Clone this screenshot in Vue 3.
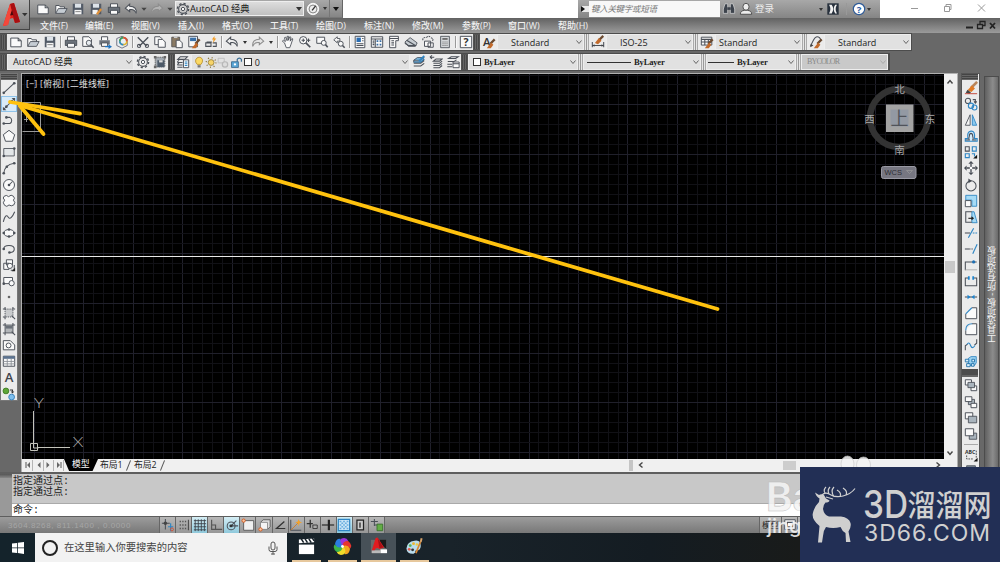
<template>
  <div class="screen">
    <div class="app-button">
      <svg class="app-logo" viewBox="0 0 30 30">
        <path d="M3 26 L10 4 L14 3 L20 22 L15 23 L13 18 L9 19 L8 25 Z" fill="#e2231a" />
        <path d="M10 4 L14 3 L20 22 L15 23 L12 12 Z" fill="#a80f12" />
        <path d="M3 26 L10 4 L12 12 L8 25 Z" fill="#f4473a" />
        <path d="M10 15.500 L12 10 L13.300 15 Z" fill="#4a0a0c" />
        <path d="M22 13 h5.500 l-2.700 3.200 z" fill="#333" />
      </svg>
    </div>

    <header class="titlebar">
      <div class="quick">
        <span v-for="(q, i) in quickIcons" :key="i" class="cell" :style="{ width: q.w + 'px' }">
          <svg class="ic" viewBox="0 0 16 16" v-html="icons[q.n]"></svg>
        </span>
        <div class="workspace">
          <svg class="ic" viewBox="0 0 16 16" v-html="icons.gear"></svg>
          <span class="ws-name">AutoCAD 经典</span>
          <i class="tri"></i>
        </div>
        <span class="cell w17"><svg class="ic" viewBox="0 0 16 16" v-html="icons.gauge"></svg></span>
        <span class="cell w8"><i class="tri small"></i></span>
        <span class="cell w13 custom"><i class="tri dark"></i></span>
      </div>
      <div class="title-gap"></div>
      <div class="info">
        <span class="info-arrow"><i class="tri right"></i></span>
        <div class="search">键入关键字或短语</div>
        <span class="cell w18"><svg class="ic" viewBox="0 0 16 16" v-html="icons.binoculars"></svg></span>
        <span class="cell w16"><svg class="ic" viewBox="0 0 16 16" v-html="icons.person"></svg></span>
        <span class="login">登录</span>
        <i class="tri small"></i>
        <span class="cell w20"><svg class="ic" viewBox="0 0 16 16" v-html="icons.exchange"></svg></span>
        <span class="info-sep"></span>
        <span class="cell w17"><svg class="ic" viewBox="0 0 16 16" v-html="icons.help"></svg></span>
        <i class="tri small last"></i>
      </div>
      <div class="window-ctl">
        <svg class="ctl" viewBox="0 0 120 18">
          <path d="M31 8.500h7M64.500 6.500h5v5h-5zM66 6.500v-2h5v5h-1.500M98 4.500l7 7M105 4.500l-7 7" fill="none" stroke="#999" stroke-width="1" />
        </svg>
      </div>
    </header>

    <nav class="menubar">
      <span v-for="m in menus" :key="m.t" class="menu" :style="{ width: m.w + 'px' }">{{ m.t }}</span>
      <svg class="doc-ctl" viewBox="0 0 36 15">
        <path d="M2 9.500h7" stroke="#222" stroke-width="2" />
        <path d="M13.500 6.500h5v4h-5zM16 6v-2.500h5v4h-2" fill="none" stroke="#222" stroke-width="1.300" />
        <path d="M26 5l5 5.500M31 5l-5 5.500" stroke="#222" stroke-width="1.800" />
      </svg>
    </nav>

    <div class="toolrow">
      <span class="grip"></span>
      <div class="strip std">
        <template v-for="(n, i) in standardIcons" :key="i">
          <span v-if="n === '|'" class="vsep"></span>
          <span v-else-if="n === 'v'" class="cell w9"><i class="tri small"></i></span>
          <span v-else class="cell w17"><svg class="ic" viewBox="0 0 16 16" v-html="icons[n]"></svg></span>
        </template>
      </div>
      <span class="grip"></span>
      <template v-for="(s, i) in styleCombos" :key="s.icon">
        <span v-if="i" class="dsep"></span>
        <span class="strip cell w17"><svg class="ic" viewBox="0 0 16 16" v-html="icons[s.icon]"></svg></span>
        <div class="combo style" :style="{ paddingLeft: s.pad + 'px' }">
          <span>{{ s.text }}</span>
          <svg class="chev" viewBox="0 0 8 8"><path d="M1.500 2.500l2.500 3 2.500-3" /></svg>
        </div>
      </template>
    </div>

    <div class="toolrow second">
      <span class="grip"></span>
      <div class="combo ws">
        <span class="ws-name">AutoCAD 经典</span>
        <svg class="chev" viewBox="0 0 8 8"><path d="M1.500 2.500l2.500 3 2.500-3" /></svg>
      </div>
      <div class="strip">
        <span class="cell w17"><svg class="ic" viewBox="0 0 16 16" v-html="icons.gear"></svg></span>
        <span class="cell w17"><svg class="ic" viewBox="0 0 16 16" v-html="icons.wsSave"></svg></span>
      </div>
      <span class="grip"></span>
      <div class="strip"><span class="cell w16"><svg class="ic" viewBox="0 0 16 16" v-html="icons.layerProps"></svg></span></div>
      <div class="combo layer">
        <svg v-for="n in ['bulb', 'sun', 'vpFreeze', 'unlock']" :key="n" class="ic lay" viewBox="0 0 16 16" v-html="icons[n]"></svg>
        <i class="swatch"></i><span>0</span>
        <svg class="chev" viewBox="0 0 8 8"><path d="M1.500 2.500l2.500 3 2.500-3" /></svg>
      </div>
      <div class="strip">
        <span v-for="n in ['layers', 'layerPrev', 'layerState']" :key="n" class="cell w17">
          <svg class="ic" viewBox="0 0 16 16" v-html="icons[n]"></svg>
        </span>
      </div>
      <span class="grip"></span>
      <div class="combo prop color">
        <i class="swatch"></i><span>ByLayer</span>
        <svg class="chev" viewBox="0 0 8 8"><path d="M1.500 2.500l2.500 3 2.500-3" /></svg>
      </div>
      <span class="dsep"></span>
      <div class="combo prop ltype">
        <i class="line"></i><span>ByLayer</span>
        <svg class="chev" viewBox="0 0 8 8"><path d="M1.500 2.500l2.500 3 2.500-3" /></svg>
      </div>
      <span class="dsep"></span>
      <div class="combo prop lweight">
        <i class="line"></i><span>ByLayer</span>
        <svg class="chev" viewBox="0 0 8 8"><path d="M1.500 2.500l2.500 3 2.500-3" /></svg>
      </div>
      <span class="dsep"></span>
      <div class="combo prop plot">
        <span>BYCOLOR</span>
        <svg class="chev" viewBox="0 0 8 8"><path d="M1.500 2.500l2.500 3 2.500-3" /></svg>
      </div>
    </div>

    <main class="work">
      <aside class="dock left">
        <div class="vgrip"></div>
        <span v-for="n in drawIcons" :key="n" class="vcell" :class="{ hot: n === 'xline' }">
          <svg class="ic" viewBox="0 0 16 16" v-html="icons[n]"></svg>
        </span>
      </aside>

      <section class="doc">
        <div class="view-row">
          <svg class="canvas" viewBox="22 74 922 385">
            <rect x="22" y="74" width="922" height="385" fill="#000" />
            <line v-for="g in gridX" :key="'x' + g.p" :x1="g.p" :x2="g.p" y1="74" y2="459" :stroke="g.major ? '#20202b' : '#111116'" />
            <line v-for="g in gridY" :key="'y' + g.p" :y1="g.p" :y2="g.p" x1="22" x2="944" :stroke="g.major ? '#20202b' : '#111116'" />
            <text x="26" y="87" class="vp-label" textLength="83">[−] [俯视] [二维线框]</text>
            <path d="M22 256.500h922" stroke="#e8e8e8" />
            <path d="M22.500 102.500h18v29h-18M24 119.500h4M26.500 114v8" fill="none" stroke="#999" />
            <path d="M33.500 411v32M38 447.500h32M30.500 443.500h7v7h-7zM33.500 443v5h5" fill="none" stroke="#c4c4bc" />
            <text x="39" y="408" class="axis" textLength="10" lengthAdjust="spacingAndGlyphs">Y</text>
            <text x="78" y="446.500" class="axis" textLength="11" lengthAdjust="spacingAndGlyphs">X</text>
            <circle cx="899" cy="118" r="29" fill="none" stroke="#333" stroke-width="6.500" />
            <rect x="886" y="104.500" width="27.500" height="27.500" fill="#a3a3a3" />
            <rect x="890.500" y="109.500" width="18" height="17" fill="#9399a3" />
            <text x="899.500" y="124.500" class="cube-top">上</text>
            <text x="899.500" y="93" class="compass">北</text>
            <text x="899.500" y="153.500" class="compass">南</text>
            <text x="869.500" y="123" class="compass">西</text>
            <text x="930" y="123" class="compass">东</text>
            <rect x="881.500" y="166.500" width="34.500" height="12" rx="2" fill="#777781" stroke="#9a9aa4" />
            <text x="884.500" y="175" class="wcs" textLength="17.500">WCS</text>
            <path d="M906.500 170.500h6l-3 3z" fill="none" stroke="#999" stroke-width=".7" />
          </svg>
          <div class="vscroll">
            <svg class="arrow" viewBox="0 0 12 12"><path d="M3.500 7.500l2.500-3 2.500 3" /></svg>
            <i class="thumb"></i>
            <svg class="arrow" viewBox="0 0 12 12"><path d="M3.500 4.500l2.500 3 2.500-3" /></svg>
          </div>
        </div>
        <div class="tabs">
          <svg class="tab-nav" viewBox="0 0 42 12">
            <path d="M10.500 1v11M21.500 1v11M31.500 1v11M41.500 1v11" stroke="#b5b5b5" />
            <path d="M4 3v6M39 3v6" stroke="#555" />
            <path d="M8 3v6l-3-3zM18.500 3v6l-3-3zM24.500 3v6l3-3zM35 3v6l3-3z" fill="#666" />
          </svg>
          <span class="tab active">模型</span>
          <span class="tab">布局1</span>
          <i class="slash"></i>
          <span class="tab">布局2</span>
          <i class="slash"></i>
          <span class="fill"></span>
          <i class="split"></i>
          <div class="hscroll">
            <svg class="arrow" viewBox="0 0 12 12"><path d="M7.500 3.500l-3 2.500 3 2.500" /></svg>
            <i class="thumb"></i>
            <svg class="arrow" viewBox="0 0 12 12"><path d="M4.500 3.500l3 2.500-3 2.500" /></svg>
          </div>
        </div>
      </section>

      <aside class="dock right">
        <div class="vgrip"></div>
        <span v-for="n in modifyIcons" :key="n" class="vcell">
          <svg class="ic" viewBox="0 0 16 16" v-html="icons[n]"></svg>
        </span>
        <div class="vgrip dark"></div>
        <span v-for="n in orderIcons" :key="n" class="vcell">
          <svg class="ic" viewBox="0 0 16 16" v-html="icons[n]"></svg>
        </span>
        <i class="hsep"></i>
        <span class="vcell"><svg class="ic" viewBox="0 0 16 16" v-html="icons.textFront"></svg></span>
        <span class="vcell"><svg class="ic" viewBox="0 0 16 16" v-html="icons.hatchBack"></svg></span>
      </aside>

      <aside class="palette"><span>工具选项板 - 所有选项板</span></aside>
    </main>

    <section class="command">
      <div class="cmd-grip"></div>
      <div class="cmd-body">
        <div class="history"><p>指定通过点:</p><p>指定通过点:</p></div>
        <div class="prompt">命令:</div>
      </div>
    </section>

    <footer class="status">
      <span class="coords">3604.8268, 811.1400 , 0.0000</span>
      <span v-for="s in statusIcons" :key="s" class="st" :class="{ on: ['stGrid', 'stPolar', 'stTpy'].includes(s) }">
        <svg class="ic" viewBox="0 0 16 16" v-html="icons[s]"></svg>
      </span>
      <span class="space"></span>
      <span class="st model">模型</span>
      <span class="st"><svg class="ic" viewBox="0 0 16 16" v-html="icons.layout"></svg></span>
      <span class="st"></span>
    </footer>

    <div class="taskbar">
      <div class="start">
        <svg viewBox="0 0 14 14"><path d="M1 2.600L6 1.900v4.600H1zM6.800 1.800L13 .9v5.600H6.800zM1 7.300h5v4.800l-5-.7zM6.800 7.300H13v5.700l-6.200-.9z" fill="#fff" /></svg>
      </div>
      <div class="task-search">
        <i class="cortana"></i>
        <span>在这里输入你要搜索的内容</span>
        <svg class="mic" viewBox="0 0 10 14"><path d="M3 3a2 2 0 0 1 4 0v4a2 2 0 0 1-4 0zM1 5.500v3Q1 10.500 3 10.500h4q2 0 2-2v-3M5 10.500v3M3 13h4" /></svg>
      </div>
      <span class="task clap">
        <svg viewBox="0 0 20 20"><path d="M2 8h16v10H2z" fill="#fff" /><path d="M2 2.500l16-1v4l-16 1z" fill="#fff" /><path d="M4.500 2l2.500 4M8.500 2l2.500 4M12.500 2l2.500 4M16 1l2 3" stroke="#17222a" stroke-width="1.600" /></svg>
      </span>
      <span class="task">
        <svg viewBox="0 0 20 20">
          <path v-for="(c, i) in wheel" :key="c" d="M10 10Q5 7 8 2Q14-.5 16 4Q14 4 10 10" :fill="c" :transform="`rotate(${i * 60} 10 10)`" />
          <circle cx="10" cy="10" r="1.500" fill="#fff" />
        </svg>
      </span>
      <span class="task active">
        <svg viewBox="0 0 20 20"><path d="M2 3h16v14H2z" fill="#6b6b6b" /><path d="M11 3h7v9l-7-4z" fill="#1b1b1b" /><path d="M12 13h7v4h-7z" fill="#fff" /><path d="M3 14h9v3H3z" fill="#bbb" /><path d="M3 14L7 1l2-.5L16 11l-5 1.500-2-1-2 .5-1 2z" fill="#e21c20" /><path d="M9 1l6 10-4 .5z" fill="#a81216" /></svg>
      </span>
      <span class="task">
        <svg viewBox="0 0 20 20"><path d="M10 4Q2 5 1.500 12Q2 18 9 17.500Q11 17 11 14.500Q12 13 14 14Q18 12 16 6Q14 3 10 4" fill="#b9dcec" /><circle cx="9" cy="7" r="1.500" fill="#f0b52c" /><circle cx="5.500" cy="9" r="1.500" fill="#58b45a" /><circle cx="4.500" cy="13" r="1.500" fill="#e45a4c" /><circle cx="12.500" cy="8" r="1.300" fill="#f0cf3c" /><circle cx="8" cy="13.500" r="1.500" fill="#333" /><path d="M11.500 17l4.800-12" stroke="#d98732" stroke-width="1.800" /><path d="M15.500 5l1-4 2 .5-1 4z" fill="#d8a36a" /></svg>
      </span>
    </div>

    <svg class="overlay" viewBox="0 0 1000 562">
      <g fill="none" stroke="#ffc20e" stroke-width="3.800" stroke-linecap="round" stroke-linejoin="round">
        <path d="M717.500 309L20 105.500" />
        <path d="M80 113.700L10 102" />
        <path d="M43.500 134L20 106" />
      </g>
      <g class="wm">
        <ellipse cx="847.500" cy="464" rx="6.500" ry="8" />
        <ellipse cx="863.500" cy="465" rx="7" ry="8" />
        <text x="766" y="511" class="wm-big">Bai</text>
        <text x="767" y="533" class="wm-small">jingyan</text>
      </g>
    </svg>

    <div class="brand">
      <svg viewBox="800 467 200 95">
        <path class="deer" d="M815 492.500L819 495Q821 493.500 824 495L826 498.500L829.500 500.500Q829 502.500 825.500 502.500Q823 505 823 509Q824 515 829 516.500L841 516.500Q849 517.500 850.500 523Q851.500 527 848.500 531.500L850.500 542H846L845.500 533Q842 531 840.500 527Q833 529 826 527Q823 531 823 536L822 542.500H818L819.500 526Q812 520 812.700 514Q814 507 819 502L819.500 498.500Q816.500 497 815 492.500Z" />
        <path class="antler" d="M822 495Q825 492 829 494Q835 498 843 496Q851 494 855 488.500M825 493Q823 490 826 487M829 494Q827 490 830 487M834 496.500Q830 491 834 487M840 496.500Q842 493 837 490M846 495Q848 491 843 488M826 497L833 499" />
        <text x="863" y="518" class="brand-num" textLength="45" lengthAdjust="spacingAndGlyphs">3D</text>
        <text x="907.500" y="516" class="brand-cn" textLength="84" lengthAdjust="spacingAndGlyphs">溜溜网</text>
        <text x="864" y="541" class="brand-url" textLength="126" lengthAdjust="spacing">3D66.COM</text>
      </svg>
    </div>
  </div>
</template>

<script setup>
const menus = [
  { t: '文件(F)', w: 45 },
  { t: '编辑(E)', w: 46 },
  { t: '视图(V)', w: 47 },
  { t: '插入(I)', w: 44 },
  { t: '格式(O)', w: 48 },
  { t: '工具(T)', w: 46 },
  { t: '绘图(D)', w: 48 },
  { t: '标注(N)', w: 48 },
  { t: '修改(M)', w: 50 },
  { t: '参数(P)', w: 46 },
  { t: '窗口(W)', w: 50 },
  { t: '帮助(H)', w: 46 }
]

// shared line colours
const K = 'fill="none" stroke="#4b5058" stroke-width="1.2"'
const B = 'fill="none" stroke="#2f86c4" stroke-width="1.3"'
const W = 'fill="#fafafa" stroke="#4b5058" stroke-width="1.1"'
const dot = (x, y) => `<circle cx="${x}" cy="${y}" r="1.5" fill="#4b5058"/>`
const brush = '<path d="M14.500 5l-5 5" stroke="#6b4a30" stroke-width="2.600"/><path d="M10.500 8.500l2.500 2.500-3 4H5.500z" fill="#c26a2b"/>'

const icons = {
  page: `<path d="M2 3.500h8.500l3.500 3v7H2z" ${W}/><path d="M10.500 3.500v3H14" ${K}/>`,
  open: `<path d="M2 13V4h4l1 1.500h5V8" ${W}/><path d="M2 13l3-5.500h10L12 13z" fill="#c5ccd3" stroke="#4b5058"/>`,
  save: '<path d="M2 2h12v12H2z" fill="#525a66"/><path d="M4.500 2h7v4.500h-7z" fill="#dde3e9"/><path d="M4 9h8v5H4z" fill="#f5f5f5"/><path d="M5 11h6" stroke="#777"/>',
  saveAs: '<path d="M2 2h12v12H2z" fill="#525a66"/><path d="M4.500 2h7v4.500h-7z" fill="#dde3e9"/><path d="M4 9h6v5H4z" fill="#f5f5f5"/><path d="M14 8l-5 6" stroke="#e0913a" stroke-width="2.500"/>',
  print: `<path d="M4 6V2h8v4" ${W}/><path d="M1.500 6h13v6h-13z" fill="#6b727b" stroke="#454a52"/><path d="M4 9.500h8V14H4z" ${W}/>`,
  undo: '<path d="M6.500 2.500L1.500 7l5 4V8.700q5.500-1 7.500 4.300Q15 5 6.500 4.800z" fill="#eee" stroke="#4b5058" stroke-width="1.2"/>',
  redo: '<path d="M9.500 2.500l5 4.500-5 4V8.700Q4 7.700 2 13 1 5 9.500 4.800z" fill="#ddd" fill-opacity=".4" stroke="#8d8d8d" stroke-width="1.200"/>',
  tri: '<path d="M5 6.500h6l-3 3.500z" fill="#444"/>',
  gear: `<circle cx="8" cy="8" r="5" ${K}/><circle cx="8" cy="8" r="6.400" fill="none" stroke="#4b5058" stroke-width="1.600" stroke-dasharray="2.500 2.500"/><circle cx="8" cy="8" r="1.900" ${W}/>`,
  gauge: '<circle cx="8" cy="8" r="6.500" fill="#eee" stroke="#fff"/><circle cx="8" cy="8" r="4.500" fill="none" stroke="#777"/><path d="M7 9.500l4-5" stroke="#333" stroke-width="1.600"/>',
  binoculars: '<path d="M3.500 2h3v11H1.500V8zM9.500 2h3l2 6v5h-5z" fill="#3d434c" stroke="#ddd" stroke-width=".8"/><path d="M6 6h4v3H6z" fill="#3d434c"/>',
  person: '<ellipse cx="8" cy="5.500" rx="3.500" ry="4" fill="#ededed" stroke="#444"/><path d="M1.500 14q0-4 5-4.500h3q5 .5 5 4.500z" fill="#ededed" stroke="#444"/>',
  exchange: '<path d="M1.500 1.500h13v13h-13z" fill="#28313d"/><path d="M3.500 3h3q3.500 5 0 10h-3q3-5 0-10M12.500 3h-2q-3.500 5 0 10h2q-3-5 0-10" fill="#f0f0f0"/>',
  help: '<circle cx="8" cy="8" r="6.500" fill="#fff" stroke="#2d5a97" stroke-width="1.300"/><text x="8" y="12" text-anchor="middle" font-size="11" font-weight="700" font-family="Open Sans" fill="#1d5aa5">?</text>',
  preview: `<path d="M2 2h7l3 3v8H2z" ${W}/><circle cx="9" cy="9" r="3" fill="#e8edf1" stroke="#4b5058"/><path d="M11 11l3.500 3.500" stroke="#4b5058" stroke-width="1.800"/>`,
  publish: `<path d="M4 6V2h7v4" ${W}/><path d="M1.500 6h12v5h-12z" fill="#6b727b"/><path d="M4 9h7v4H4z" ${W}/><path d="M8 12.500h4v-2l4 3-4 2.500v-2H8z" fill="#1b72c1"/>`,
  dwf: '<path d="M2 4l6-2.500 6 3v7.500l-6 3-6-3z" fill="#e7eef3" stroke="#667"/><circle cx="9.500" cy="7" r="4" fill="none" stroke="#e3b52e" stroke-width="2"/><path d="M5.500 7a4 4 0 0 1 4-4" fill="none" stroke="#36a06a" stroke-width="2"/><path d="M9.500 3a4 4 0 0 1 4 4" fill="none" stroke="#d34b3f" stroke-width="2"/><path d="M5.500 7a4 4 0 0 0 4 4" fill="none" stroke="#2b89cd" stroke-width="2"/>',
  cut: `<path d="M2 2.500l10 10M14 2.500l-10 10" stroke="#4b5058" stroke-width="1.600"/><circle cx="3.500" cy="12.500" r="1.800" ${K}/><circle cx="12.500" cy="12.500" r="1.800" ${K}/>`,
  copy: `<path d="M2 2h6l2 2v7H2z" ${W}/><path d="M6 5h5l3 3v6H6z" ${W}/>`,
  paste: `<path d="M2 2.500h9v11H2z" fill="#8a7a64" stroke="#555"/><path d="M4.500 1.500h4v2h-4z" fill="#ccc"/><path d="M7 6h4l3 3v5.500H7z" ${W}/>`,
  match: `<path d="M2 1.500h10v12H2z" ${W}/><path d="M3.500 3h7v4h-7z" fill="#3a70a8"/>${brush}`,
  blockEdit: `<path d="M2 9h6v4H2zM10 9h4v4h-4M3 8h6" ${K}/><path d="M12 1l-3 4h2l-1 4 4-5h-2z" fill="#f39a1f"/>`,
  pan: '<path d="M4 9L1.500 7l1.500-1 2 1.500L4 3l1.500-.5 1.500 4V1.500h1.500V6L10 2l1.300.5L10.500 7l2-3 1 .5-2 6L10 14.500H6z" fill="#fafafa" stroke="#4b5058"/>',
  zoomRt: `<circle cx="6" cy="6" r="4.200" ${W}/><path d="M9 9l5 5" stroke="#4b5058" stroke-width="2"/><path d="M6 4v4M4 6h4M12 4v4M10 6h4" ${K}/>`,
  zoomWin: `<path d="M2 2.500h9v7H2z" ${W}/><circle cx="10" cy="9" r="2.800" ${W}/><path d="M12 11l2.500 3" stroke="#4b5058" stroke-width="1.800"/>`,
  zoomPrev: `<path d="M6 2L2 5.500 6 9V7h3V4H6z" fill="#f6f6f6" stroke="#4b5058"/><circle cx="10" cy="10" r="2.800" ${W}/><path d="M12 12l2.500 2.500" stroke="#4b5058" stroke-width="1.800"/>`,
  props: `<path d="M2.500 1.500h11v13h-11z" ${W}/><path d="M4 3h5v5H4z" fill="#2a6db3"/><path d="M10.500 4H12M10.500 6.500H12M4 10h8M4 12h8" ${K}/>`,
  dcenter: `<path d="M1.500 2h13v12h-13z" ${W}/><path d="M1.500 4.500h13M6 4.500V14" ${K}/><path d="M7.500 6h2v2h-2zM11 6h2v2h-2zM7.500 10h2v2h-2zM11 10h2v2h-2z" fill="#3a6fa5"/><path d="M3 7h2M3 9h2M3 11h2" ${K}/>`,
  palettes: `<path d="M3 1.500h10v5H10v8H3z" ${W}/><path d="M3 4h10M5 6.500h3M5 9h3M5 11.500h3" ${K}/>`,
  sheets: `<path d="M1 8l6-5 8 6-2 4H5z" fill="#c6ccd1" stroke="#4b5058"/><path d="M1 9.500l4 2.500h9M3 6l10 6" ${K}/>`,
  markup: `<path d="M2 6q0-4 4-3 3-3 5 0 4 1 2 4" ${K} stroke-dasharray="2 1"/><path d="M4 7h7v6H4zM8 9h6v5H8z" ${W}/>`,
  calc: `<path d="M3 1.500h10v13H3z" fill="#d5d8db" stroke="#4b5058"/><path d="M5 3.500h6v2H5z" fill="#666"/><path d="M5 8h6M5 10h6M5 12h6" stroke="#777" stroke-dasharray="1.500 .8"/>`,
  helpBox: `<path d="M1.500 1.500h13v13h-13z" ${W}/><text x="8" y="12.500" text-anchor="middle" font-size="12" font-weight="700" font-family="Open Sans" fill="#333">?</text>`,
  textStyle: `<text x="1" y="12" font-size="13" font-weight="600" font-family="Open Sans" fill="#333">A</text>${brush}`,
  dimStyle: `<path d="M1.500 8v6M14.500 8v6M1.500 12h13" ${K}/><path d="M4 10.500L1.500 12 4 13.500M12 10.500l2.500 1.500L12 13.500" fill="#444"/><path d="M14 1L9 6" stroke="#6b4a30" stroke-width="2.600"/><path d="M9 3.500l3 3L8 10.500 4.500 9z" fill="#c26a2b"/>`,
  tableStyle: `<path d="M1.500 2.500h12v9h-12z" ${W}/><path d="M1.500 5h12M1.500 8h12M5.500 5v6.500M9.500 5v6.500" ${K}/>${brush}`,
  leaderStyle: `<path d="M1.500 13L5 6q3-6 7-3l2 3" ${K}/><path d="M2 10l-.5 4L5 12z" fill="#444"/>${brush}`,
  wsSave: `<path d="M2.500 2.500h11v11h-11z" fill="#a3aab1" stroke="#555" stroke-dasharray="1.500 1"/><path d="M1 1h3v3H1zM12 1h3v3h-3zM1 12h3v3H1z" fill="#666"/><path d="M5 6h8v8H5z" fill="#4d5a68"/><path d="M7 6h4v2.500H7z" fill="#ddd"/>`,
  layerProps: `<path d="M2 5l3-3h8l-3 3zM1.500 8l2-2M1.500 11l2-2M2 5h7M1.500 8.500h6M1.500 11.500h6M1.500 14h6" ${K}/><path d="M8.500 5.500h6v9h-6z" ${W}/><path d="M10 8h3M10 10h3M10 12h3" ${B}/>`,
  bulb: '<path d="M5.500 10.500Q2.500 7.500 3.500 4.500 5 1 8 1q3.500 0 4.500 3.500.5 3-2 6z" fill="#fbd964" stroke="#b58a22"/><path d="M6 11.500h4v3H6z" fill="#777"/>',
  sun: '<circle cx="8" cy="8" r="3.800" fill="#f7d468" stroke="#8b7638"/><circle cx="8" cy="8" r="6.300" fill="none" stroke="#8b7638" stroke-width="1.800" stroke-dasharray="1.300 3.650"/>',
  vpFreeze: '<path d="M1.500 2.500h8v6h-8z" fill="none" stroke="#b7b7b7"/><circle cx="10.500" cy="10.500" r="3.500" fill="#ddd" stroke="#b7b7b7" stroke-width="1.600"/>',
  unlock: '<path d="M9.500 7V4a3 3 0 0 1 5.500 0v3" fill="none" stroke="#3a6d93" stroke-width="1.600"/><path d="M2 7h9v7.500H2z" fill="#5aa6d6" stroke="#2d5f86"/><circle cx="6.500" cy="10.500" r="1.500" fill="#fff"/>',
  layers: `<path d="M2 6l4-3h8l-4 3z" fill="#7cbce6" stroke="#3a4a5a"/><path d="M2 6v2h8l4-3M2 9.500h8l4-3M2 12.500h8l4-3" ${K}/><path d="M2 8h8l4-3.500" ${B}/><path d="M8 7l6-6" stroke="#2f86c4" stroke-width="2"/>`,
  layerPrev: `<path d="M1 2.500h5M1 2.500l2.500-2M1 2.500l2.500 2" ${K}/><path d="M5 7l3-2.500h7L12 7zM5 9.500h7l3-2.500M5 12h7l3-2.500M5 14.500h7l3-2.500" ${K}/>`,
  layerState: `<path d="M3 4l3-2h8l-3 2zM2 7.500h7l3-2M1.500 10.500H7M1.500 13.500H7" ${K}/><path d="M8 8h7v6.500H8z" ${W}/><path d="M8 10h7" ${K}/>`,

  line: `<path d="M2 13.500L14 2.500" ${K}/>${dot(2, 13.5)}${dot(14, 2.5)}`,
  xline: `<path d="M2 14L14 2" ${K}/>${dot(5, 11)}${dot(11, 5)}<path d="M1 15v-4l4 4zM15 1v4l-4-4z" fill="#4b5058"/>`,
  pline: `<path d="M2 12h7a4 4 0 0 0 0-7H5" ${K}/>${dot(2, 12)}${dot(5, 5)}`,
  polygon: `<path d="M8 1.500l6.500 5-2.500 7.500H4L1.500 6.500z" ${W}/>`,
  rect: `<path d="M2 4h12v8.500H2z" fill="#e3e6e8" stroke="#4b5058"/>${dot(2, 12.5)}${dot(14, 4)}`,
  arc: `<path d="M2 14Q3 4 14 2.500" ${K}/>${dot(2, 14)}${dot(5.5, 6.5)}${dot(14, 2.5)}`,
  circle: `<circle cx="8" cy="8" r="6.300" ${W}/>${dot(8, 8)}<path d="M8 8l4-4" ${K}/>`,
  cloud: `<path d="M3 7Q0 4.500 2.500 2.500 5 .5 7.500 3 10.500 0 13 2.500 15.500 5 13 7q3 2.500 .5 5.500-3 2-5.500 0-2.500 3-5 .5Q0 10 3 7z" ${W}/>`,
  spline: `<path d="M1.500 13.500q2.500-10 5.500-5.500t7.500-6" ${K}/>`,
  ellipse: `<ellipse cx="8" cy="8" rx="6" ry="4" ${W}/>${dot(2, 8)}${dot(14, 8)}${dot(8, 4)}${dot(8, 12)}`,
  ellipseArc: `<path d="M2 8Q2 4 8 4t6 4-5 4" ${K}/>${dot(2, 8)}${dot(8.5, 12)}`,
  insert: `<path d="M5 2h7v6H5zM2 6h6v7H2z" ${W}/><circle cx="9" cy="9" r="3" ${W}/><path d="M10 14l4 0V8" ${K}/><path d="M15 11v4h-4z" fill="#222"/>`,
  makeBlock: `<path d="M2 4h10v7H2z" ${W}/><circle cx="11" cy="10.500" r="3" ${W}/>${dot(2, 11)}`,
  point: '<circle cx="8" cy="8" r="1.500" fill="#666"/>',
  hatch: `<path d="M3.500 3.500h9v9h-9z" fill="#c9cbcd" stroke="#4b5058" stroke-dasharray="1.500 1"/><path d="M1 3.500h3M12 3.500h3M1 12.500h3M3.500 1v3M12.500 1v3M3.500 12v3M11 11l4 4" ${K}/>`,
  gradient: `<path d="M3.500 3.500h9v9h-9z" fill="#b2b5b8" stroke="#4b5058"/><path d="M4 4.500h8v3H4z" fill="#6a7078"/><path d="M1 3.500h3M12 3.500h3M1 12.500h3M3.500 1v3M12.500 1v3M3.500 12v3M11 11l4 4" ${K}/>`,
  region: `<path d="M1.500 3h8l5 5v5.500h-13z" ${W}/><circle cx="7.500" cy="8.500" r="2.800" ${W}/>`,
  table: `<path d="M1.500 2.500h13v11.500h-13z" ${W}/><path d="M1.500 2.500h13v3h-13z" fill="#5c7391"/><path d="M1.500 8.500h13M1.500 11.300h13M6 5v9M10.500 5v9" stroke="#8a8f96"/>`,
  mtext: '<text x="8" y="13.500" text-anchor="middle" font-size="15" font-weight="600" font-family="Open Sans" fill="#3f444b">A</text>',
  addSel: '<circle cx="4.500" cy="4.500" r="3.300" fill="#5da637" stroke="#3d7a22"/><circle cx="11" cy="11.500" r="3.300" fill="#7fc0ef" stroke="#2f7cb8"/><path d="M9 3.500h3v2" fill="none" stroke="#333" stroke-width="1.200"/><path d="M10 5h4l-2 2.500z" fill="#333"/>',

  erase: '<path d="M15 1L8 8" stroke="#b9855a" stroke-width="3"/><path d="M9 5l3.500 3.500-4 4-4.500-2z" fill="#e07a25"/><path d="M4 10l4 3-2 1.500-4-1z" fill="#444"/><path d="M1 14.500h14" stroke="#c0392b"/>',
  copyObj: `<circle cx="4.500" cy="4.500" r="3" ${K}/><circle cx="8" cy="10" r="3" ${B}/><circle cx="12" cy="12" r="2.800" ${B}/><path d="M10 3h3v3M11.500 5l1.500 2 1.500-2" ${K}/>`,
  mirror: '<path d="M7 2v12H1.500z" fill="#f5f5f5" stroke="#4b5058"/><path d="M9.500 2v12h5z" fill="#8cc9ee" stroke="#2f86c4"/>',
  offset: `<path d="M1.500 14v-3h3Q3 3 8 2.500T12 11h3v3z" fill="#d3eafa" stroke="#2f86c4" stroke-width="1.300"/><path d="M2 12.500h4q-1-2 0-4Q6 5 8 5t2 3.500q1 2 0 4h4" ${K}/>`,
  array: `<path d="M1.500 2h4.500v5H1.500z" ${K}/><path d="M9.500 2h4.500v5H9.500zM1.500 10h4.500v4.500H1.500z" ${B}/><path d="M9 10h3v3" ${B}/><path d="M15 11v4.500h-4.500z" fill="#111"/>`,
  move: '<path d="M8 0l3 3H5zM8 16l3-3H5zM0 8l3-3v6zM16 8l-3-3v6z" fill="#454a52"/><path d="M8 3v10M3 8h10" stroke="#454a52" stroke-width="1.500"/><circle cx="8" cy="8" r="1.500" fill="#fff"/>',
  rotate: `<circle cx="8" cy="9" r="5.800" ${K}/><path d="M5 .5l4 3-4 2.500z" fill="#454a52"/>`,
  scale: `<path d="M2 1.500h12.500V14H9V7H2z" fill="#a5daf5" stroke="#2f86c4"/><path d="M1.500 7.500H8v7H1.500z" ${W}/>`,
  stretch: `<path d="M9 2h2.500l3.500 12.500H9z" fill="#a5daf5" stroke="#2f86c4"/><path d="M9 2H2v12h7" ${K}/><path d="M5 9.500h5" stroke="#222" stroke-width="1.300"/><path d="M8.500 7l3 2.500-3 2.500z" fill="#222"/>`,
  trim: `<path d="M1 8h6" ${K}/><path d="M10 8h5" stroke="#2f86c4" stroke-width="1.300" stroke-dasharray="2 1"/><path d="M5 13.500L11 2.500" ${B}/>`,
  extend: `<path d="M1 8h5" ${K}/><path d="M6 8h5" ${K} stroke-dasharray="1.500 1"/><path d="M10 13.500L15 2.500" ${B}/>`,
  breakPt: `<path d="M1.500 14V4.500h13" ${K}/><path d="M1.500 13.500H15" stroke="#aaa"/><circle cx="11" cy="4.500" r="1.800" fill="#1d6fb4"/>`,
  breakObj: `<path d="M5.500 4.500h-4v9h13v-9h-4" ${K}/><path d="M4.500 2.500h2v4h-2zM9.500 2.500h2v4h-2z" fill="#1d85d0"/>`,
  join: `<path d="M1 8h14" ${K}/><path d="M4 5.500L7.500 8 4 10.500zM12 5.500L8.500 8l3.500 2.500z" fill="#1d85d0"/>`,
  chamfer: `<path d="M2 9v5.500h12.500V2H9" ${W}/><path d="M2 9l7-7" ${B}/>`,
  fillet: `<path d="M2 9.500v5h12.500V2H9" ${W}/><path d="M2 9.500Q2 2 9.500 2" ${B}/>`,
  blend: `<path d="M1.500 14V9L4 7M12 8l2.500-2V1.500" ${K}/><path d="M3.500 7.500q2-4 4 1t5 0" ${B}/>`,
  explode: `<path d="M5 5l3-2h6v7l-2 3H5z" fill="#9bd2f1" stroke="#2f86c4"/><path d="M1.500 6h4v3h-4zM3 11h4v3.500H3zM9 6h3v3H9zM8.500 11h3v3h-3z" fill="#d8eefb" stroke="#1d6fa8"/>`,
  front: `<path d="M1.500 2h7v6h-7zM8 9h6.500v5.500H8z" ${W}/><path d="M4.500 5h7.500v6H4.500z" fill="#a9b4bd" stroke="#4b5058"/>`,
  back: `<path d="M5 5h7v6H5z" fill="#a9b4bd" stroke="#4b5058"/><path d="M1.500 2H9v5.500H1.500zM8 9.500h6.500v5H8z" ${W}/>`,
  above: `<path d="M1.500 2H10v7H1.500z" ${W}/><path d="M5 6h9.500v7.500H5z" fill="#a9b4bd" stroke="#4b5058"/>`,
  under: `<path d="M6 7h8.500v7H6z" fill="#a9b4bd" stroke="#4b5058"/><path d="M1.500 2H11v8H1.500z" ${W}/>`,
  textFront: '<text x="1" y="7" font-size="6" font-weight="700" font-family="Open Sans" fill="#333">ABC</text><path d="M3 8.500v4h7M14 3v8" fill="none" stroke="#444" stroke-dasharray="2 1"/><path d="M15.500 11v4.500H11z" fill="#111"/>',
  hatchBack: `<path d="M3 2h10v9H3z" fill="#7a8794" stroke="#4b5058"/>`,

  stInfer: `<path d="M5 1v12M1 6h9" ${K}/><circle cx="5" cy="6" r="2" fill="#444"/><path d="M11 6v9M8 10h6" ${B}/><circle cx="12.500" cy="13" r="1.700" fill="none" stroke="#d34b2e"/>`,
  stSnap: '<path d="M3 4h8M3 8h8M3 12h8" stroke="#555" stroke-width="1.500" stroke-dasharray="1.500 1.500"/><path d="M13 2v12" stroke="#333"/>',
  stGrid: '<path d="M1 3h14M1 6.500h14M1 10h14M1 13.500h14M2.500 1.500v13.500M6 1.500v13.500M9.500 1.500v13.500M13 1.500v13.500" stroke="#3b4048" stroke-width="1"/>',
  stOrtho: '<path d="M3 2v11h12M3 8h4.500v5" fill="none" stroke="#555" stroke-width="1.300"/>',
  stPolar: `<circle cx="7" cy="9" r="4.500" ${K}/><path d="M5 9h10M7 9l6-6" ${K}/><path d="M5.500 7.500h3v3h-3z" fill="#333"/>`,
  stOsnap: '<path d="M3 3h11.500v11H3z" fill="#f0f0f0" stroke="#555"/><circle cx="3" cy="3" r="1.900" fill="#f7c6a2" stroke="#d3571b"/>',
  st3d: '<path d="M4 5l3-3h8v8l-3 3H4z" fill="#ddd" stroke="#555"/><path d="M4 5h8v8H4z" fill="#f4f4f4" stroke="#888"/><circle cx="4" cy="13" r="1.900" fill="#f7c6a2" stroke="#d3571b"/>',
  stOtrack: '<path d="M13 4L4 12h10" fill="none" stroke="#333" stroke-width="1.400"/>',
  stDucs: `<path d="M2 2v12h12" ${K}/><path d="M2 14L12 4" stroke="#cc7a27"/><path d="M11 1l1 3 3 1-3 1-1 3-1-3-3-1 3-1z" fill="#f2a32c"/>`,
  stDyn: '<path d="M6 2v9M2 6.500h7" stroke="#333" stroke-width="1.500"/><path d="M9 8h5v4H9z" fill="#aaa" stroke="#333"/>',
  stLwt: '<path d="M1 8h14" stroke="#222" stroke-width="1.300"/><path d="M9 2v12" stroke="#222" stroke-width="2.500"/>',
  stTpy: '<path d="M1.500 1.500h13v13h-13z" fill="#cbe6f7" stroke="#2f86c4" stroke-width="1.400"/><path d="M3 4h10M3 8h10M3 12h10" stroke="#69ade0" stroke-width="1.800" stroke-dasharray="2 2"/><path d="M5 6h8M5 10h8" stroke="#69ade0" stroke-width="1.800" stroke-dasharray="2 2"/>',
  stQp: '<path d="M4.500 2.500h7.500v11H4.500z" fill="#ccc" stroke="#222" stroke-width="1.400"/><path d="M8 5v6" stroke="#333" stroke-width="1.600"/>',
  stSc: `<path d="M5 1v8M1 4h8M5 8h4" ${K}/><path d="M8 7h6.500v7.500H8z" fill="#62ad45" stroke="#37702a"/>`,
  layout: `<path d="M2 2h12v11H2z" ${W}/><path d="M5 5h6v5H5z" ${K}/>`
}

const quickIcons = [
  { n: 'page', w: 18 }, { n: 'open', w: 17 }, { n: 'save', w: 18 }, { n: 'saveAs', w: 17 },
  { n: 'print', w: 19 }, { n: 'undo', w: 16 }, { n: 'tri', w: 9 }, { n: 'redo', w: 17 }, { n: 'tri', w: 10 }
]

const standardIcons = [
  'page', 'open', 'save', '|', 'print', 'preview', 'publish', 'dwf', '|',
  'cut', 'copy', 'paste', 'match', 'blockEdit', '|', 'undo', 'v', 'redo', 'v', '|',
  'pan', 'zoomRt', 'zoomWin', 'zoomPrev', '|',
  'props', 'dcenter', 'palettes', 'sheets', 'markup', 'calc', '|', 'helpBox'
]

const styleCombos = [
  { icon: 'textStyle', text: 'Standard', pad: 13 },
  { icon: 'dimStyle', text: 'ISO-25', pad: 13 },
  { icon: 'tableStyle', text: 'Standard', pad: 3 },
  { icon: 'leaderStyle', text: 'Standard', pad: 13 }
]

const drawIcons = [
  'line', 'xline', 'pline', 'polygon', 'rect', 'arc', 'circle', 'cloud', 'spline', 'ellipse',
  'ellipseArc', 'insert', 'makeBlock', 'point', 'hatch', 'gradient', 'region', 'table', 'mtext', 'addSel'
]

const modifyIcons = [
  'erase', 'copyObj', 'mirror', 'offset', 'array', 'move', 'rotate', 'scale', 'stretch',
  'trim', 'extend', 'breakPt', 'breakObj', 'join', 'chamfer', 'fillet', 'blend', 'explode'
]

const orderIcons = ['front', 'back', 'above', 'under']

const statusIcons = [
  'stInfer', 'stSnap', 'stGrid', 'stOrtho', 'stPolar', 'stOsnap', 'st3d',
  'stOtrack', 'stDucs', 'stDyn', 'stLwt', 'stTpy', 'stQp', 'stSc'
]

const wheel = ['#9a35d8', '#e8352e', '#f2a51f', '#f0dc2a', '#3db54a', '#2b7de0']

// every fifth grid line is a major one
const makeGrid = (origin, from, to, step) => {
  const list = []
  for (let i = Math.ceil((from - origin) / step); origin + i * step < to; i++) {
    list.push({ p: Math.round(origin + i * step) + 0.5, major: i % 5 === 0 })
  }
  return list.sort((a, b) => a.major - b.major)
}

const gridX = makeGrid(34, 23, 944, 9.89)
const gridY = makeGrid(154, 74, 459, 9.93)
</script>

<style>
body {
  background: #686868;
  overflow: hidden;
}
</style>

<style scoped>
.screen {
  position: relative;
  width: 1000px;
  height: 562px;
  overflow: hidden;
  display: flex;
  flex-direction: column;
  background: #686868;
  font-family: "Open Sans", "Noto Sans CJK SC", sans-serif;
  font-size: 9px;
  line-height: 1;
  color: #222;
  white-space: nowrap;
}

.screen * {
  box-sizing: border-box;
}

.ic {
  width: 14px;
  height: 14px;
  flex: none;
  display: block;
}

.cell {
  display: flex;
  align-items: center;
  justify-content: center;
  flex: none;
}

.w8 { width: 8px; }
.w9 { width: 9px; }
.w13 { width: 13px; }
.w16 { width: 16px; }
.w17 { width: 17px; }
.w18 { width: 18px; }
.w20 { width: 20px; }

.tri {
  width: 0;
  height: 0;
  border: 3px solid transparent;
  border-top: 4px solid #333;
  border-bottom: 0;
}

.tri.dark {
  border-top-color: #111;
}

.tri.small {
  border-width: 3px 2px 0;
}

.tri.right {
  border: 3px solid transparent;
  border-left: 4px solid #111;
  border-right: 0;
}

/* application menu button sits over the title and menu bars */
.app-button {
  position: absolute;
  left: 0;
  top: 0;
  z-index: 2;
  width: 30px;
  height: 30px;
  background: linear-gradient(#b5b5b5, #7c7c7c);
  border-right: 1px solid #444;
  border-bottom: 1px solid #444;
}

.app-logo {
  width: 30px;
  height: 30px;
}

.titlebar {
  display: flex;
  height: 18px;
  flex: none;
  background: #fff;
}

.quick {
  display: flex;
  align-items: center;
  width: 343px;
  padding-left: 34px;
  background: linear-gradient(#a8a8a8, #858585);
  border-right: 1px solid #666;
  border-bottom: 1px solid #777;
}

.workspace {
  display: flex;
  align-items: center;
  width: 131px;
  height: 15px;
  padding: 0 1px 0 0;
  background: linear-gradient(#ddd, #c0c0c0);
  border: 1px solid #eee;
}

.ws-name {
  flex: 1;
  font-size: 9.300px;
  letter-spacing: -0.050px;
}

.custom {
  height: 17px;
  border-left: 1px solid #777;
}

.title-gap {
  width: 235px;
}

.info {
  display: flex;
  align-items: center;
  width: 302px;
  background: linear-gradient(#a8a8a8, #858585);
}

.info-arrow {
  display: flex;
  align-items: center;
  justify-content: center;
  width: 11px;
  height: 18px;
}

.search {
  width: 131px;
  height: 16px;
  padding: 4px 2px;
  background: #f8f8f8;
  color: #777;
  font-style: italic;
  font-size: 8.500px;
  letter-spacing: -0.300px;
}

.login {
  width: 65px;
  padding-left: 1px;
  color: #eee;
  font-size: 9.500px;
}

.info-sep {
  width: 1px;
  height: 12px;
  margin: 0 3px 0 3px;
  background: #999;
}

.window-ctl,
.ctl {
  width: 120px;
  height: 18px;
}

.menubar {
  display: flex;
  align-items: center;
  height: 15px;
  flex: none;
  padding-left: 40px;
  background: linear-gradient(#626262, #9b9b9b);
  color: #f0f0f0;
  font-size: 9px;
  font-weight: 500;
}

.doc-ctl {
  width: 36px;
  height: 15px;
  margin-left: auto;
}

.toolrow {
  display: flex;
  height: 18px;
  flex: none;
  padding: 1px 0;
  background: linear-gradient(#4c4c4c, #4c4c4c) no-repeat;
  background-size: 912px 18px;
}

.toolrow.second {
  margin-top: 2px;
  background-size: 890px 18px;
}

.grip {
  width: 7px;
  flex: none;
  background: repeating-linear-gradient(90deg, #484848 0 1px, #656565 1px 2px);
  border: 1px solid #555;
}

.strip {
  display: flex;
  flex: none;
  background: #ebebeb;
}

.std {
  width: 466px;
}

.vsep {
  width: 4px;
  flex: none;
  border-left: 1px solid transparent;
  background: linear-gradient(90deg, #999 1px, #f8f8f8 1px) no-repeat 1px 2px / 2px 12px;
}

.dsep {
  width: 5px;
  flex: none;
  background: linear-gradient(90deg, #aaa 1px, #e6e6e6 1px 2px, #999 2px 3px, #e6e6e6 3px 4px, #aaa 4px);
}

.combo {
  display: flex;
  align-items: center;
  flex: none;
  background: #e1e1e1;
  border: 1px solid #eee;
}

.style {
  width: 87px;
}

.chev {
  width: 8px;
  height: 8px;
  margin-left: auto;
  margin-right: 0;
  fill: none;
  stroke: #666;
}

.ws {
  width: 127px;
  padding-left: 5px;
}

.layer {
  width: 219px;
  padding-left: 1px;
  font-size: 9px;
}

.lay {
  width: 12.200px;
  height: 13px;
}

.swatch {
  width: 8px;
  height: 8px;
  flex: none;
  margin: 0 3px 0 2px;
  background: #fff;
  border: 1px solid #333;
}

.prop {
  font-family: "Liberation Serif", serif;
  font-weight: 700;
  font-size: 8.600px;
  letter-spacing: -0.200px;
}

.color {
  width: 110px;
  padding-left: 2px;
}

.ltype {
  width: 118px;
  padding-left: 3px;
}

.lweight {
  width: 90px;
  padding-left: 1px;
}

.line {
  height: 1px;
  margin-right: 3px;
  background: #333;
}

.ltype .line { width: 44px; }
.lweight .line { width: 26px; }

.plot {
  width: 87px;
  padding-left: 5px;
  background: #c9c9c9;
  color: #888;
  font-weight: 400;
  font-size: 8px;
  letter-spacing: -0.850px;
}

.plot .chev {
  stroke: #aaa;
}

.work {
  display: flex;
  height: 399px;
  flex: none;
  margin-top: 2px;
}

.dock {
  display: flex;
  flex-direction: column;
  align-items: center;
  flex: none;
}

.left {
  width: 18px;
  height: 328px;
  margin-right: 3px;
  background: #ebebeb;
  border: 1px solid #777;
}

.vgrip {
  width: 16px;
  height: 6px;
  flex: none;
  align-self: stretch;
  background: repeating-linear-gradient(#444 0 1px, #666 1px 2px);
}

.vcell {
  display: flex;
  align-items: center;
  justify-content: center;
  height: 16.080px;
  width: 16px;
  flex: none;
}

.hot {
  background: #d9ebf8;
  border: 1px solid #8fc3ea;
}

.doc {
  width: 937px;
  flex: none;
  border-top: 1px solid #b0b0b0;
  border-left: 1px solid #b0b0b0;
  border-right: 1px solid #b0b0b0;
  background: #f0f0f0;
}

.view-row {
  display: flex;
  height: 385px;
}

.canvas {
  width: 922px;
  height: 385px;
  flex: none;
}

.vp-label {
  fill: #e0e0e0;
  font-size: 8.800px;
}

.axis {
  fill: #aaa;
  font-size: 13px;
  font-family: Lato, sans-serif;
  font-weight: 300;
  text-anchor: middle;
}

.compass {
  fill: #aaa;
  font-size: 10.500px;
  text-anchor: middle;
}

.cube-top {
  fill: #50535a;
  font-size: 18px;
  text-anchor: middle;
}

.wcs {
  fill: #2e2e34;
  font-size: 7.500px;
  font-family: "Liberation Sans", sans-serif;
}

.vscroll {
  display: flex;
  flex-direction: column;
  width: 12px;
  padding: 2px 0 0;
  background: #f0f0f0;
}

.arrow {
  width: 12px;
  height: 12px;
  flex: none;
  fill: none;
  stroke: #444;
  stroke-width: 1.400;
}

.vscroll .thumb {
  height: 12px;
  margin: 173px 1px auto 1px;
  background: #c8c8c8;
}

.tabs {
  display: flex;
  align-items: center;
  height: 12px;
  background: #f0f0f0;
}

.tab-nav {
  width: 42px;
  height: 12px;
}

.tab {
  width: 28px;
  padding-left: 2px;
  font-size: 8.800px;
}

.tab.active {
  width: 34px;
  height: 12px;
  padding: 1px 0 0 8px;
  background: #000;
  color: #fff;
  clip-path: polygon(0 0, 100% 0, 84% 100%, 15% 100%);
}

.slash {
  width: 1px;
  height: 11px;
  margin: 0 3px 0 2px;
  background: #555;
  transform: rotate(22deg);
}

.fill {
  flex: 1;
}

.split {
  width: 4px;
  height: 11px;
  background: #c5c5c5;
}

.hscroll {
  display: flex;
  align-items: center;
  width: 324px;
  padding: 0 13px 0 2px;
}

.hscroll .thumb {
  width: 13px;
  height: 9px;
  margin: 0 auto 0 136px;
  background: #cdcdcd;
}

.right {
  width: 19px;
  margin-left: 3px;
  background: #ebebeb;
  border: 1px solid #555;
  overflow: hidden;
}

.vgrip.dark {
  height: 8px;
  background: #4c4c4c;
  border-bottom: 2px solid #666;
}

.hsep {
  width: 14px;
  height: 1px;
  flex: none;
  margin: 2px 0;
  background: #aaa;
}

.palette {
  display: flex;
  justify-content: center;
  width: 15px;
  margin-left: 4px;
  margin-top: 3px;
  padding-top: 168px;
  background: linear-gradient(90deg, #606060, #8c8c8c 60%, #6a6a6a);
  border: 1px solid #4c4c4c;
  color: #f0f0f0;
  font-size: 9px;
}

.palette span {
  writing-mode: vertical-rl;
  transform: rotate(180deg);
  height: 98px;
  line-height: 13px;
}

.command {
  display: flex;
  height: 45px;
  flex: none;
  padding: 2px 0 1px;
  background: #5e5e5e;
}

.cmd-grip {
  width: 12px;
  background: linear-gradient(#555, #888 4px, #999 4px);
}

.cmd-body {
  flex: 1;
  font-family: "Liberation Mono", "Noto Sans CJK SC", monospace;
  font-size: 10px;
}

.history {
  height: 30px;
  padding: 2px 0 0 1px;
  background: #c8c8c8;
  border-bottom: 1px solid #aaa;
}

.history p {
  margin: 0;
  height: 11px;
  line-height: 11px;
}

.prompt {
  height: 12px;
  padding: 2px 1px 0;
  background: #fff;
}

.status {
  display: flex;
  height: 16px;
  flex: none;
  background: linear-gradient(#9c9c9c, #787878);
}

.coords {
  width: 159px;
  padding: 5px 0 0 8px;
  color: #a6a6a6;
  font-family: "Liberation Sans", sans-serif;
  font-size: 8px;
  letter-spacing: 0.600px;
}

.st {
  display: flex;
  align-items: center;
  justify-content: center;
  width: 16.080px;
  flex: none;
  background: linear-gradient(#b8b8b8, #979797);
  border-left: 1px solid #666;
}

.st.on {
  background: linear-gradient(#d5eef5, #8fc9dc);
}

.space {
  width: 375px;
  border-left: 1px solid #666;
}

.st.model {
  width: 22px;
  font-size: 8.500px;
}

.taskbar {
  display: flex;
  height: 29px;
  flex: none;
  background: linear-gradient(90deg, #14232b, #19232a 45%, #141c22 65%, #191b1a 80%);
}

.start {
  display: flex;
  align-items: center;
  justify-content: center;
  width: 35px;
}

.start svg {
  width: 14px;
  height: 14px;
}

.task-search {
  display: flex;
  align-items: center;
  width: 252px;
  padding: 0 9px 0 7px;
  background: #f2f2f2;
  color: #444;
  font-size: 10.300px;
}

.cortana {
  width: 16px;
  height: 16px;
  margin-right: 6px;
  border: 2px solid #222;
  border-radius: 50%;
}

.mic {
  width: 10px;
  height: 14px;
  margin-left: auto;
  fill: none;
  stroke: #555;
}

.task {
  display: flex;
  align-items: center;
  justify-content: center;
  width: 29px;
  margin-right: 7px;
  border-bottom: 2px solid #e7c89d;
}

.clap {
  margin-left: 5px;
}

.task:nth-child(4) {
  margin-right: 4px;
}

.task.active {
  width: 35px;
  margin-right: 4px;
  background: #475158;
}

.task svg {
  width: 19px;
  height: 19px;
}

.overlay {
  position: absolute;
  left: 0;
  top: 0;
  width: 1000px;
  height: 562px;
}

.wm {
  fill: #f4f4f4;
  opacity: .88;
}

.wm ellipse {
  stroke: #ccc;
  stroke-width: .8;
}

.wm-big {
  font-family: Inter, sans-serif;
  font-weight: 700;
  font-size: 40px;
  stroke: #bbb;
  stroke-width: .6;
}

.wm-small {
  font-family: Inter, sans-serif;
  font-weight: 500;
  font-size: 20px;
}

.brand {
  position: absolute;
  left: 800px;
  top: 467px;
  width: 200px;
  height: 95px;
  background: #222f55;
}

.brand svg {
  width: 200px;
  height: 95px;
}

.brand text {
  fill: #d0d0d0;
}

.deer {
  fill: #cfcfcf;
}

.antler {
  fill: none;
  stroke: #cfcfcf;
  stroke-width: 1.200;
}

.brand-num {
  font-size: 38px;
  font-weight: 500;
  font-family: Inter, sans-serif;
}

.brand-cn {
  font-size: 30px;
  font-weight: 500;
  font-family: "Noto Sans CJK SC", sans-serif;
}

.brand-url {
  font-size: 23px;
  font-weight: 400;
  font-family: Inter, sans-serif;
}
</style>
